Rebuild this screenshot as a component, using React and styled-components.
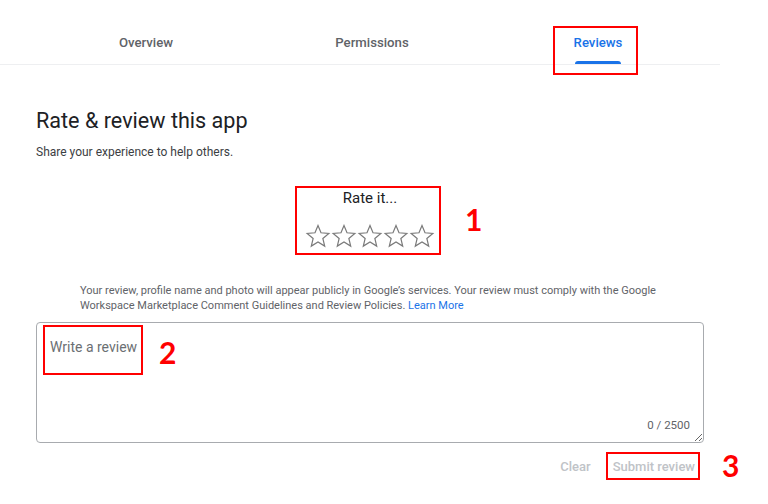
import React from "react";
import styled, { createGlobalStyle, css } from "styled-components";

const GlobalStyle = createGlobalStyle`
  html, body { margin: 0; padding: 0; background: #ffffff; }
  body { font-family: Roboto, "Liberation Sans", Arial, sans-serif; color: #202124; }
  * { box-sizing: border-box; }
`;

const Page = styled.div`
  width: 768px;
  min-height: 504px;
  background: #ffffff;
`;

const TabBar = styled.nav`
  display: grid;
  grid-template-columns: repeat(3, 1fr);
  width: 720px;
  height: 65px;
  padding: 0 9px 0 33px;
  border-bottom: 1px solid #eeeff1;
`;

const Tab = styled.div`
  display: flex;
  flex-direction: column;
  align-items: center;
  justify-content: flex-end;
  height: 64px;
`;

const TabInner = styled.div`
  position: relative;
  display: flex;
  flex-direction: column;
  align-items: center;
`;

const TabLabel = styled.span`
  font-size: 13.2px;
  line-height: 20px;
  font-weight: 500;
  color: ${(p) => (p.$active ? "#1a73e8" : "#5f6368")};
`;

const Indicator = styled.span`
  display: block;
  margin-top: 8px;
  width: 46px;
  height: 3px;
  border-radius: 3px 3px 0 0;
  background: ${(p) => (p.$active ? "#1a73e8" : "transparent")};
`;

const Annotation = styled.span`
  position: absolute;
  border: 2px solid #ff0000;
  pointer-events: none;
  ${(p) => p.$top !== undefined && css`top: ${p.$top}px;`}
  ${(p) => p.$right !== undefined && css`right: ${p.$right}px;`}
  ${(p) => p.$bottom !== undefined && css`bottom: ${p.$bottom}px;`}
  ${(p) => p.$left !== undefined && css`left: ${p.$left}px;`}
  ${(p) => p.$w !== undefined && css`width: ${p.$w}px;`}
  ${(p) => p.$h !== undefined && css`height: ${p.$h}px;`}
`;

const Marker = styled.span`
  position: absolute;
  left: ${(p) => p.$left};
  top: ${(p) => p.$top}px;
  font-family: Lato, "DejaVu Sans", sans-serif;
  font-weight: 700;
  font-size: 30px;
  line-height: 30px;
  color: #ff0000;
  white-space: nowrap;
`;

const Main = styled.main`
  width: 668px;
  margin-left: 36px;
`;

const Title = styled.h1`
  margin: 42px 0 0;
  font-size: 21.6px;
  line-height: 28px;
  font-weight: 400;
  color: #202124;
`;

const Subtitle = styled.p`
  margin: 9px 0 0;
  font-size: 12px;
  line-height: 16px;
  color: #3c4043;
`;

const RatingSection = styled.section`
  display: flex;
  justify-content: center;
  margin-top: 28px;
`;

const RatingInner = styled.div`
  position: relative;
  display: flex;
  flex-direction: column;
  align-items: center;
`;

const RatePrompt = styled.div`
  font-size: 15px;
  line-height: 20px;
  color: #202124;
`;

const Stars = styled.div`
  display: flex;
  margin-top: 16px;
`;

const StarButton = styled.span`
  display: block;
  width: 26px;
  height: 24px;
  svg { display: block; }
`;

const Notice = styled.p`
  margin: 35px 0 0;
  padding-left: 44px;
  font-size: 11px;
  line-height: 15px;
  color: #5f6368;
`;

const LearnMore = styled.a`
  color: #1a73e8;
  text-decoration: none;
`;

const Field = styled.div`
  position: relative;
  margin-top: 9px;
`;

const ReviewInput = styled.textarea`
  display: block;
  width: 668px;
  height: 121px;
  padding: 14px 13px;
  border: 1px solid #a8abaf;
  border-radius: 4px;
  font-family: Roboto, "Liberation Sans", Arial, sans-serif;
  font-size: 14px;
  line-height: 20px;
  color: #202124;
  outline: none;
  resize: both;
  &::placeholder { color: #6b6f73; }
`;

const Counter = styled.span`
  position: absolute;
  right: 14px;
  bottom: 11px;
  font-size: 11.5px;
  line-height: 14px;
  color: #5f6368;
`;

const Actions = styled.div`
  display: flex;
  justify-content: flex-end;
  gap: 10px;
  margin-top: 8px;
  padding-right: 3px;
`;

const SubmitWrap = styled.div`
  position: relative;
`;

const ActionButton = styled.button`
  height: 30px;
  padding: 0 6px;
  border: none;
  background: none;
  font-family: Roboto, "Liberation Sans", Arial, sans-serif;
  font-size: 13px;
  font-weight: 500;
  color: #c0c3c7;
  cursor: default;
`;

const StarIcon = () => (
  <svg width="26" height="24" viewBox="0 0 26 24">
    <polygon
      points="13,1.5 16,8.77 23.84,9.38 17.85,14.48 19.7,22.12 13,18 6.3,22.12 8.15,14.48 2.16,9.38 10,8.77"
      fill="none"
      stroke="#7a7a7a"
      strokeWidth="1.2"
    />
  </svg>
);

export default function App() {
  return (
    <Page>
      <GlobalStyle />
      <TabBar>
        <Tab>
          <TabInner>
            <TabLabel>Overview</TabLabel>
            <Indicator />
          </TabInner>
        </Tab>
        <Tab>
          <TabInner>
            <TabLabel>Permissions</TabLabel>
            <Indicator />
          </TabInner>
        </Tab>
        <Tab>
          <TabInner>
            <TabLabel $active>Reviews</TabLabel>
            <Indicator $active />
            <Annotation $top={-7} $bottom={-11} $left={-21} $right={-16} />
          </TabInner>
        </Tab>
      </TabBar>
      <Main>
        <Title>Rate &amp; review this app</Title>
        <Subtitle>Share your experience to help others.</Subtitle>
        <RatingSection>
          <RatingInner>
            <RatePrompt>Rate it...</RatePrompt>
            <Stars>
              {[0, 1, 2, 3, 4].map((i) => (
                <StarButton key={i}>
                  <StarIcon />
                </StarButton>
              ))}
            </Stars>
            <Annotation $top={-2} $bottom={-7} $left={-10} $right={-6} />
            <Marker $left="calc(100% + 30px)" $top={16}>1</Marker>
          </RatingInner>
        </RatingSection>
        <Notice>
          Your review, profile name and photo will appear publicly in Google’s services. Your review must comply with the Google
          <br />
          Workspace Marketplace Comment Guidelines and Review Policies. <LearnMore href="#">Learn More</LearnMore>
        </Notice>
        <Field>
          <ReviewInput placeholder="Write a review" />
          <Counter>0 / 2500</Counter>
          <Annotation $top={3} $left={7} $w={100} $h={50} />
          <Marker $left="123px" $top={15}>2</Marker>
        </Field>
        <Actions>
          <ActionButton>Clear</ActionButton>
          <SubmitWrap>
            <ActionButton>Submit review</ActionButton>
            <Annotation $top={1} $bottom={1} $left={-1} $right={1} />
            <Marker $left="calc(100% + 21px)" $top={-1}>3</Marker>
          </SubmitWrap>
        </Actions>
      </Main>
    </Page>
  );
}
